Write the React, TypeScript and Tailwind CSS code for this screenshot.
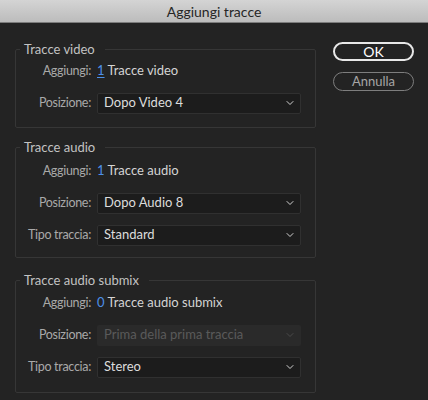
import React from 'react';
import { ChevronDown } from 'lucide-react';

const Select = ({ value, disabled = false }: { value: string; disabled?: boolean }) => (
  <div
    className={
      disabled
        ? 'flex h-[21px] w-[204px] items-center justify-between rounded-[2px] bg-[#2a2a2a] pl-[7px] pr-[5px] text-[#5a5a5a]'
        : 'flex h-[21px] w-[204px] items-center justify-between rounded-[2px] border border-[#303030] bg-[#1c1c1c] pl-[6px] pr-[4px] text-[#dcdcdc]'
    }
  >
    <span>{value}</span>
    <ChevronDown className={disabled ? 'h-[12px] w-[12px] text-[#4a4a4a]' : 'h-[12px] w-[12px] text-[#d0d0d0]'} strokeWidth={2} />
  </div>
);

const Row = ({ label, children }: { label: string; children: React.ReactNode }) => (
  <div className="flex h-[32px] items-center">
    <div className="w-[76px] pr-[1px] text-right text-[12.5px] tracking-[-0.3px] text-[#a9a9a9]">{label}</div>
    <div className="ml-[5px] flex items-center">{children}</div>
  </div>
);

const Count = ({ n, text, underline = false }: { n: string; text: string; underline?: boolean }) => (
  <span className="text-[#d4d4d4]">
    <span className={underline ? 'text-[#4d90e8] underline decoration-[#4d90e8] underline-offset-2' : 'text-[#4d90e8]'}>{n}</span>{' '}
    {text}
  </span>
);

const Group = ({
  title,
  className,
  inner = '-mt-[2px]',
  children,
}: {
  title: string;
  className: string;
  inner?: string;
  children: React.ReactNode;
}) => (
  <fieldset className={`w-[301px] rounded-[2px] border border-[#363636] ${className}`}>
    <legend className="ml-[4px] pl-[4px] pr-[10px] leading-[16px] text-[#c2c2c2]">{title}</legend>
    <div className={`flex flex-col ${inner}`}>{children}</div>
  </fieldset>
);

const App = () => {
  return (
    <div className="flex h-[400px] w-[428px] flex-col overflow-hidden bg-[#232323] text-[13px] font-['Lato',sans-serif]">
      {/* Title bar */}
      <div className="flex h-[23px] items-center justify-center border-b border-[#7c7c7c] bg-gradient-to-b from-[#d4d4d4] to-[#bcbcbc] text-[14px] text-[#262626]">
        Aggiungi tracce
      </div>

      <div className="flex pl-[15px] pt-[18px]">
        <div className="flex flex-col">
          <Group title="Tracce video" className="pb-[8px]">
            <Row label="Aggiungi:">
              <Count n="1" text="Tracce video" underline />
            </Row>
            <Row label="Posizione:">
              <Select value="Dopo Video 4" />
            </Row>
          </Group>

          <Group title="Tracce audio" className="mt-[11px] pb-[6px]" inner="mt-0">
            <Row label="Aggiungi:">
              <Count n="1" text="Tracce audio" />
            </Row>
            <Row label="Posizione:">
              <Select value="Dopo Audio 8" />
            </Row>
            <Row label="Tipo traccia:">
              <Select value="Standard" />
            </Row>
          </Group>

          <Group title="Tracce audio submix" className="mt-[14px] pb-[9px]" inner="-mt-[1px]">
            <Row label="Aggiungi:">
              <Count n="0" text="Tracce audio submix" />
            </Row>
            <Row label="Posizione:">
              <Select value="Prima della prima traccia" disabled />
            </Row>
            <Row label="Tipo traccia:">
              <Select value="Stereo" />
            </Row>
          </Group>
        </div>

        <div className="ml-[17px] flex flex-col gap-[11px] pt-[1px]">
          <button className="flex h-[19px] w-[81px] items-center justify-center rounded-full border-2 border-[#e8e8e8] text-[14px] text-white">
            OK
          </button>
          <button className="flex h-[19px] w-[81px] items-center justify-center rounded-full border-[1.5px] border-[#7e7e7e] text-[13px] text-[#a6a6a6]">
            Annulla
          </button>
        </div>
      </div>
    </div>
  );
};

export default App;
